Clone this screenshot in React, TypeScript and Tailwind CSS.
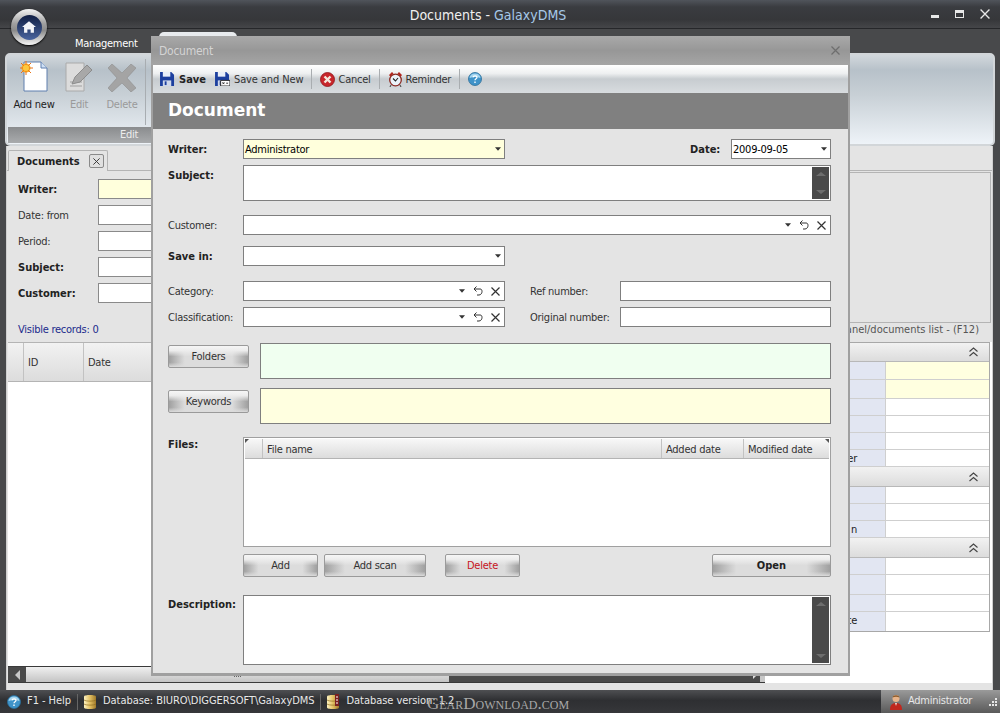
import { ReactNode } from "react";

const Dropdown = () => (
  <svg width="6" height="4" viewBox="0 0 7 4" className="shrink-0">
    <path d="M0 0h7L3.500 4z" fill="#333" />
  </svg>
);

const Undo = () => (
  <svg width="10" height="10" viewBox="0 0 10 10" fill="none" stroke="#333" strokeWidth="1" className="shrink-0">
    <path d="M2 3h5c1.500 0 2 1 2 2.500S8 9 6 9H4" />
    <path d="M3.500 .5 1 3l2.500 2.500" />
  </svg>
);

const Cross = ({ color = "#333", size = 9 }: { color?: string; size?: number }) => (
  <svg width={size} height={size} viewBox="0 0 9 9" stroke={color} strokeWidth="1.200" className="shrink-0">
    <path d="M.5 .5l8 8M8.500 .5l-8 8" />
  </svg>
);

const Chevrons = () => (
  <svg width="9" height="10" viewBox="0 0 9 10" fill="none" stroke="#444" strokeWidth="1.100">
    <path d="M.5 4.500 4.500 1l4 3.500M.5 9 4.500 5.500l4 3.500" />
  </svg>
);

const Floppy = ({ small }: { small?: boolean }) => (
  <svg width="15" height="14" viewBox="0 0 16 15" className="shrink-0">
    <path d="M0 0h12l3 3v12H0z" fill="#1c3f9e" />
    <path d="M3 0h8v5H3z" fill="#e8eef8" />
    <path d="M3 9h9v6H3z" fill="#cfd8ea" />
    <path d="M5 10h2v4H5z" fill="#1c3f9e" />
    {small && <path d="M6 9h10v6H6z" fill="#fff" stroke="#222" strokeWidth="1" />}
    {small && <path d="M8 11l2 2M10 11l-2 2M12 12h2" stroke="#222" strokeWidth="1" />}
  </svg>
);

const CancelIcon = () => (
  <svg width="15" height="15" viewBox="0 0 15 15" className="shrink-0">
    <circle cx="7.500" cy="7.500" r="7" fill="#c8262b" stroke="#8e1418" strokeWidth=".8" />
    <path d="M4.500 4.500l6 6M10.500 4.500l-6 6" stroke="#f4e8dc" strokeWidth="2.400" />
  </svg>
);

const ClockIcon = () => (
  <svg width="15" height="16" viewBox="0 0 15 16" className="shrink-0">
    <path d="M1 4 4 1l1.500 1.500L2.500 6zM14 4l-3-3-1.500 1.500 3 3.500z" fill="#b3261e" />
    <circle cx="7.500" cy="9" r="5.800" fill="#eaf3fa" stroke="#8c2a22" strokeWidth="1.300" />
    <path d="M5 7.500 7.500 10 10 7" fill="none" stroke="#222" strokeWidth="1.100" />
    <path d="M3 14l-1 2M12 14l1 2" stroke="#555" strokeWidth="1.200" />
  </svg>
);

const HelpIcon = ({ size = 14 }: { size?: number }) => (
  <svg width={size} height={size} viewBox="0 0 14 14" className="shrink-0">
    <circle cx="7" cy="7" r="6.500" fill="#3f93c9" stroke="#2a6d99" strokeWidth=".8" />
    <path d="M1.500 6a5.500 4.500 0 0 1 11 0c-3 -1.500 -8 -1.500 -11 0z" fill="#a4d4ee" />
    <path d="M5 5.300c.3-2 4-2 4 0 0 1.500-2 1.300-2 3" fill="none" stroke="#fff" strokeWidth="1.300" />
    <path d="M6.300 9.500h1.400v1.400H6.300z" fill="#fff" />
  </svg>
);

const DbIcon = ({ tag }: { tag?: boolean }) => (
  <svg width="14" height="16" viewBox="0 0 14 16" className="shrink-0">
    <defs>
      <linearGradient id="dbGold" x1="0" x2="1" y1="0" y2="0">
        <stop offset="0" stopColor="#fdf2c0" />
        <stop offset=".5" stopColor="#e2bf62" />
        <stop offset="1" stopColor="#a07a2a" />
      </linearGradient>
    </defs>
    <path d="M1 2.500C1 .5 13 .5 13 2.500v11c0 2-12 2-12 0z" fill="url(#dbGold)" />
    <path d="M1 6c2 1.500 10 1.500 12 0M1 10c2 1.500 10 1.500 12 0" fill="none" stroke="#8e6b20" strokeWidth=".7" />
    {tag && <path d="M9 0h4v12H9z" fill="#7a1f1f" />}
    {tag && <path d="M10 3h2M10 6h2M10 9h2" stroke="#fff" strokeWidth="1" />}
  </svg>
);

const UserIcon = () => (
  <svg width="14" height="16" viewBox="0 0 14 16">
    <circle cx="7" cy="4.500" r="3.500" fill="#e8b48a" />
    <path d="M3.500 3.500C4 .5 10 .5 10.500 3.500 8.500 2.500 5.500 2.500 3.500 3.500z" fill="#8a5a2a" />
    <path d="M1 16c0-5 2-7 6-7s6 2 6 7z" fill="#c0281e" />
    <path d="M6 9h2l-1 3z" fill="#f0e0d0" />
  </svg>
);

const Grip = () => (
  <svg width="10" height="10" viewBox="0 0 10 10" className="shrink-0">
    <path d="M8 1h2v2H8zM5 4h2v2H5zM8 4h2v2H8zM2 7h2v2H2zM5 7h2v2H5zM8 7h2v2H8z" fill="#e8e8e8" />
  </svg>
);

const HomeButton = () => (
  <div className="absolute left-[11px] top-[9px] w-[36px] h-[36px] rounded-full bg-[linear-gradient(#f4f4f4_0%,#a0a0a0_40%,#8a8a8a_60%,#f8f8f8_100%)] flex items-center justify-center shadow-[0_1px_2px_#000]">
    <div className="w-[25px] h-[25px] rounded-full bg-gradient-to-b from-[#111f44] to-[#4a659f] flex items-center justify-center">
      <svg width="14" height="12" viewBox="0 0 17 14">
        <path d="M8.500 0 0 7h2.500v7h4v-4h4v4h4V7H17z" fill="#f2f4f8" />
      </svg>
    </div>
  </div>
);

const RibbonButton = ({ icon, label, disabled, className }: { icon: ReactNode; label: string; disabled?: boolean; className: string }) => (
  <div className={`flex flex-col items-center pt-[5px] ${className}`}>
    <div className="h-[31px] flex items-end">{icon}</div>
    <span className={`mt-[6px] text-[11px] leading-[14px] whitespace-nowrap ${disabled ? "text-[#9a9a9a]" : "text-[#222]"}`}>{label}</span>
  </div>
);

const NewDocIcon = () => (
  <svg width="28" height="31" viewBox="0 0 28 31">
    <path d="M4 1h17l6 6v23H4z" fill="#fff" stroke="#5e7fae" strokeWidth="1" />
    <path d="M21 1v6h6" fill="#cfe0f4" stroke="#5e7fae" strokeWidth="1" />
    <circle cx="6" cy="7" r="4.500" fill="#f7a820" />
    <path d="M6 0v14M-1 7h14M1 2l10 10M11 2 1 12" stroke="#e8741a" strokeWidth="1" />
    <circle cx="6" cy="7" r="3" fill="#fcc840" />
  </svg>
);

const EditDocIcon = () => (
  <svg width="29" height="30" viewBox="0 0 29 30">
    <path d="M1 1h18v28H1z" fill="#dcdcdc" stroke="#aaa" strokeWidth="1" />
    <path d="M5 20h12M5 24h12" stroke="#b4b4b4" strokeWidth="1.500" />
    <path d="M7 22 10 15 22 3l5 5-12 12z" fill="#a8a8a8" stroke="#8c8c8c" strokeWidth="1" />
  </svg>
);

const DeleteIcon = () => (
  <svg width="28" height="28" viewBox="0 0 28 28">
    <path d="M4 0 14 9 23 0l5 4-9 10 9 10-5 4-9-9-10 9-4-4 9-10L0 4z" fill="#a4a4a4" stroke="#8e8e8e" strokeWidth=".6" />
  </svg>
);

const ToolDivider = () => <div className="w-px h-[20px] bg-[#a9adb0]" />;

const ToolText = ({ children, className = "" }: { children: ReactNode; className?: string }) => (
  <span className={`pt-[2px] ${className}`}>{children}</span>
);

const Combo = ({ value, className, yellow }: { value?: string; className: string; yellow?: boolean }) => (
  <div className={`h-[20px] border border-[#7f7f7f] flex items-center pl-[1px] pr-[3px] text-[11px] text-black ${yellow ? "bg-[#ffffdc]" : "bg-white"} ${className}`}>
    <span className="flex-1 pt-[2px] leading-[14px]">{value}</span>
    <Dropdown />
  </div>
);

const Picker = ({ className }: { className: string }) => (
  <div className={`h-[20px] border border-[#7f7f7f] bg-white flex items-center justify-end gap-[8px] pr-[4px] ${className}`}>
    <Dropdown />
    <Undo />
    <Cross />
  </div>
);

const TextBox = ({ className }: { className: string }) => <div className={`h-[20px] border border-[#7f7f7f] bg-white ${className}`} />;

const MemoBox = ({ className }: { className: string }) => (
  <div className={`border border-[#7f7f7f] bg-white flex justify-end p-[1px] ${className}`}>
    <div className="w-[17px] bg-[#4a4a4a] flex flex-col justify-between items-center py-[5px]">
      <div className="w-0 h-0 border-x-[5px] border-x-transparent border-b-[4px] border-b-[#6e6e6e]" />
      <div className="w-0 h-0 border-x-[5px] border-x-transparent border-t-[4px] border-t-[#6e6e6e]" />
    </div>
  </div>
);

const Btn = ({ label, className, text = "text-[#333]" }: { label: string; className: string; text?: string }) => (
  <div className={`h-[23px] pt-[2px] rounded-[2px] border border-[#9a9a9a] bg-[image:linear-gradient(#f6f6f6_0%,#ececec_22%,transparent_50%,transparent_78%,#dcdcdc_100%),linear-gradient(90deg,#a0a0a0_0%,#dcdcdc_20%,#dcdcdc_80%,#a0a0a0_100%)] flex items-center justify-center text-[11px] ${text} ${className}`}>
    {label}
  </div>
);

const Label = ({ children, bold, className = "w-[75px]" }: { children: ReactNode; bold?: boolean; className?: string }) => (
  <span className={`shrink-0 h-[20px] text-[11px] leading-[22px] ${bold ? "font-bold tracking-normal text-[#222]" : "text-[#333]"} ${className}`}>{children}</span>
);

const HeaderCell = ({ label, className }: { label?: string; className: string }) => (
  <div className={`h-full border-r border-[#c2c2c2] flex items-center pl-[4px] text-[11px] text-[#333] ${className}`}>{label}</div>
);

const FilterRow = ({ label, bold, yellow }: { label: string; bold?: boolean; yellow?: boolean }) => (
  <div className="flex items-center h-[20px]">
    <span className={`w-[80px] shrink-0 pt-[2px] text-[11px] ${bold ? "font-bold tracking-normal text-[#222]" : "text-[#333]"}`}>{label}</span>
    <div className={`w-[70px] h-[20px] border border-[#8a8a8a] ${yellow ? "bg-[#ffffdc]" : "bg-white"}`} />
  </div>
);

const PropHeader = ({ className }: { className: string }) => (
  <div className={`bg-gradient-to-b from-[#f2f2f2] to-[#dcdcdc] border-b border-[#b8b8b8] flex items-center justify-end pr-[11px] ${className}`}>
    <Chevrons />
  </div>
);

const PropRow = ({ label, yellow, className }: { label?: string; yellow?: boolean; className: string }) => (
  <div className={`flex border-b border-[#cfcfcf] ${className}`}>
    <div className="w-[118px] bg-[#e2e6f2] text-[11px] leading-[16px] text-[#222] text-right pr-[28px] pt-[1px]">{label}</div>
    <div className={`flex-1 border-l border-[#cfcfcf] ${yellow ? "bg-[#ffffe0]" : "bg-white"}`} />
  </div>
);

const Dialog = () => (
  <div className="absolute left-[151px] top-[36px] w-[699px] h-[640px] border-x-[2px] border-b-[3px] border-[#a0a0a0] bg-[#e4e4e4] flex flex-col">
    <div className="h-[29px] shrink-0 -mx-[2px] bg-gradient-to-b from-[#a9a9a9] via-[#979797] to-[#a5a5a5] flex items-center justify-between pl-[8px] pr-[10px]">
      <span className="text-[12px] text-[#d4d4d4]">Document</span>
      <Cross color="#6e6e6e" size={9} />
    </div>
    <div className="h-[28px] shrink-0 bg-[linear-gradient(#ffffff_0%,#eef0f1_30%,#c7ccd0_50%,#d8dcdf_100%)] flex items-center pl-[7px] text-[11px] text-[#333]">
      <Floppy />
      <ToolText className="ml-[4px] font-bold tracking-normal text-[#222]">Save</ToolText>
      <span className="ml-[9px]"><Floppy small /></span>
      <ToolText className="ml-[4px] tracking-[-0.1px]">Save and New</ToolText>
      <span className="ml-[7px]"><ToolDivider /></span>
      <span className="ml-[8px]"><CancelIcon /></span>
      <ToolText className="ml-[4px]">Cancel</ToolText>
      <span className="ml-[8px]"><ToolDivider /></span>
      <span className="ml-[8px]"><ClockIcon /></span>
      <ToolText className="ml-[3px]">Reminder</ToolText>
      <span className="ml-[8px]"><ToolDivider /></span>
      <span className="ml-[8px]"><HelpIcon /></span>
    </div>
    <div className="h-[36px] shrink-0 bg-[#808080] pl-[15px] flex items-center font-['DejaVu_Sans',sans-serif] text-[17px] tracking-normal font-bold text-white">Document</div>

    <div className="flex-1 pl-[15px] pr-[17px] pt-[10px] flex flex-col">
      <div className="flex items-center">
        <Label bold>Writer:</Label>
        <Combo value="Administrator" yellow className="w-[262px]" />
        <Label bold className="ml-auto w-[41px]">Date:</Label>
        <Combo value="2009-09-05" className="w-[100px]" />
      </div>
      <div className="flex mt-[6px]">
        <Label bold className="w-[75px]">Subject:</Label>
        <MemoBox className="flex-1 h-[36px]" />
      </div>
      <div className="flex items-center mt-[14px]">
        <Label>Customer:</Label>
        <Picker className="flex-1" />
      </div>
      <div className="flex items-center mt-[11px]">
        <Label bold>Save in:</Label>
        <Combo className="w-[262px]" />
      </div>
      <div className="flex items-center mt-[15px]">
        <Label>Category:</Label>
        <Picker className="w-[262px]" />
        <Label className="ml-[25px] w-[90px]">Ref number:</Label>
        <TextBox className="flex-1" />
      </div>
      <div className="flex items-center mt-[6px]">
        <Label>Classification:</Label>
        <Picker className="w-[262px]" />
        <Label className="ml-[25px] w-[90px]">Original number:</Label>
        <TextBox className="flex-1" />
      </div>
      <div className="flex items-start mt-[16px]">
        <Btn label="Folders" className="w-[81px] mt-[2px]" />
        <div className="flex-1 h-[36px] ml-[11px] border border-[#7f7f7f] bg-[#f0fff0]" />
      </div>
      <div className="flex items-start mt-[9px]">
        <Btn label="Keywords" className="w-[81px] mt-[2px]" />
        <div className="flex-1 h-[36px] ml-[11px] border border-[#7f7f7f] bg-[#ffffe0]" />
      </div>
      <div className="flex mt-[13px]">
        <Label bold className="w-[75px] -mt-[3px]">Files:</Label>
        <div className="flex-1 h-[110px] border border-[#a0a0a0] bg-white p-[1px]">
          <div className="relative h-[20px] bg-gradient-to-b from-[#f8f8f8] to-[#dcdcdc] border-b border-[#b4b4b4] flex">
            <div className="absolute left-0 top-0 w-0 h-0 border-t-[4px] border-t-[#555] border-r-[4px] border-r-transparent" />
            <div className="absolute right-0 top-0 w-0 h-0 border-t-[4px] border-t-[#555] border-l-[4px] border-l-transparent" />
            <HeaderCell className="w-[18px]" />
            <HeaderCell label="File name" className="w-[399px] pl-[3px] pt-[3px]" />
            <HeaderCell label="Added date" className="w-[82px] pt-[3px]" />
            <HeaderCell label="Modified date" className="flex-1 border-r-0 pt-[3px]" />
          </div>
        </div>
      </div>
      <div className="flex mt-[7px] pl-[75px]">
        <Btn label="Add" className="w-[75px]" />
        <Btn label="Add scan" className="w-[102px] ml-[6px]" />
        <Btn label="Delete" text="text-[#c8141e]" className="w-[75px] ml-[19px]" />
        <Btn label="Open" text="text-[#222] font-bold tracking-normal" className="w-[119px] ml-auto" />
      </div>
      <div className="flex mt-[18px]">
        <Label bold className="w-[75px] -mt-[1px]">Description:</Label>
        <MemoBox className="flex-1 h-[70px]" />
      </div>
    </div>
  </div>
);

export default function App() {
  return (
    <div className="relative w-[1000px] h-[713px] overflow-hidden bg-[#48494b] flex flex-col tracking-[-0.25px] font-['DejaVu_Sans_Condensed','Noto_Sans',sans-serif]">
      {/* title bar */}
      <div className="h-[29px] shrink-0 pt-[2px] pr-[24px] tracking-normal bg-[linear-gradient(#50545b_0%,#3a3c40_25%,#36373a_70%,#454649_100%)] border-b border-[#26272a] flex items-center justify-center relative text-[14px] text-[#f0f0f0]">
        <span>Documents - <span className="text-[#a6c8e8]">GalaxyDMS</span></span>
        <div className="absolute right-[10px] top-[9px] flex items-start gap-[16px]">
          <div className="w-[8px] h-[3px] mt-[6px] bg-[#e8e8e8]" />
          <div className="w-[9px] h-[8px] mt-[1px] border border-[#e8e8e8] border-t-[3px]" />
          <Cross color="#e8e8e8" size={10} />
        </div>
      </div>

      {/* menu tabs */}
      <div className="h-[24px] shrink-0 flex items-end pl-[75px]">
        <span className="w-[84px] pb-[2px] text-[11px] leading-[14px] text-white">Management</span>
        <div className="w-[78px] h-[21px] rounded-t-[5px] bg-[#e8ebee]" />
      </div>

      {/* ribbon */}
      <div className="h-[93px] shrink-0 ml-[5px] mr-[5px] rounded-[5px] border-[2px] border-[#d2d6d9] bg-[linear-gradient(#d2d8dc_0%,#b7c1c9_17%,#c8d0d6_45%,#eef3f8_100%)] flex">
        <div className="w-[150px] mt-[1px] ml-[1px] mb-[1px] flex flex-col">
          <div className="flex-1 flex">
            <RibbonButton icon={<NewDocIcon />} label="Add new" className="w-[52px]" />
            <RibbonButton icon={<EditDocIcon />} label="Edit" disabled className="w-[40px] -ml-[1px]" />
            <RibbonButton icon={<DeleteIcon />} label="Delete" disabled className="w-[44px] ml-[1px]" />
            <div className="w-px h-[66px] mt-[3px] ml-[1px] bg-[#a8adb1]" />
          </div>
          <div className="h-[16px] bg-gradient-to-b from-[#8a8c8e] to-[#a9abad] text-[11px] leading-[16px] text-[#ededed] pl-[112px]">Edit</div>
        </div>
      </div>

      {/* main area */}
      <div className="flex-1 ml-[6px] mr-[7px] border-x border-[#cfcfcf] bg-[#e4e4e4] flex min-h-0">
        <div className="w-[758px] shrink-0 flex flex-col">
          <div className="flex items-end h-[25px] border-b border-[#b4b4b4] pl-[1px]">
            <div className="w-[100px] h-[21px] -mb-px rounded-t-[2px] border border-b-0 border-[#b4b4b4] bg-[#e4e4e4] flex items-center pl-[8px] pr-[3px] justify-between text-[11px] font-bold tracking-normal text-[#222]">
              <span className="pt-[2px]">Documents</span>
              <div className="w-[15px] h-[14px] rounded-[2px] border border-[#8a8a8a] bg-[#e0e0e0] flex items-center justify-center">
                <Cross size={7} />
              </div>
            </div>
          </div>
          <div className="pl-[11px] pt-[8px] flex flex-col gap-[6px]">
            <FilterRow label="Writer:" bold yellow />
            <FilterRow label="Date: from" />
            <FilterRow label="Period:" />
            <FilterRow label="Subject:" bold />
            <FilterRow label="Customer:" bold />
          </div>
          <div className="pl-[11px] mt-[20px] text-[11px] leading-[14px] text-[#1a2a8c]">Visible records: 0</div>
          <div className="h-[40px] mt-[5px] shrink-0 ml-px bg-gradient-to-b from-[#f2f2f2] to-[#dcdcdc] border-y border-[#b4b4b4] flex">
            <HeaderCell className="w-[16px]" />
            <HeaderCell label="ID" className="w-[60px] pt-[2px]" />
            <HeaderCell label="Date" className="flex-1 border-r-0 pt-[2px]" />
          </div>
          <div className="flex-1 bg-white ml-px" />
          <div className="h-[17px] shrink-0 ml-px flex items-stretch border-y border-[#3a3a3a] bg-[#4a4a4a]">
            <div className="w-[18px] flex items-center justify-center">
              <div className="w-0 h-0 border-y-[5px] border-y-transparent border-r-[5px] border-r-[#c8c8c8]" />
            </div>
            <div className="w-[423px] bg-gradient-to-b from-[#f0f0f0] to-[#c4c4c4] flex items-center justify-center gap-[1px]">
              <div className="w-px h-[5px] bg-[#666]" />
              <div className="w-px h-[5px] bg-[#666]" />
              <div className="w-px h-[5px] bg-[#666]" />
              <div className="w-px h-[5px] bg-[#666]" />
            </div>
            <div className="flex-1 flex items-center justify-end pr-[3px]">
              <div className="w-0 h-0 border-y-[4px] border-y-transparent border-l-[4px] border-l-[#e0e0e0]" />
            </div>
            <div className="w-[5px] bg-[#c8c8c8]" />
          </div>
          <div className="h-[7px] shrink-0 bg-[#e4e4e4]" />
        </div>
        <div className="flex-1 min-w-0 bg-white flex flex-col">
          <div className="bg-[#e4e4e4] pb-[5px]">
            <div className="h-[25px] border-b border-[#b4b4b4]" />
            <div className="mx-[1px] mt-[1px] h-[151px] border border-[#b4b4b4]" />
            <div className="text-right pr-[13px] tracking-normal text-[11px] leading-[14px] text-[#555]">anel/documents list - (F12)</div>
          </div>
          <div className="ml-[1px] mr-[2px] border border-[#a8a8a8] bg-white">
            <PropHeader className="h-[19px]" />
            <PropRow yellow className="h-[18px]" />
            <PropRow yellow className="h-[19px]" />
            <PropRow className="h-[17px]" />
            <PropRow className="h-[17px]" />
            <PropRow className="h-[17px]" />
            <PropRow label="er" className="h-[17px]" />
            <PropHeader className="h-[20px]" />
            <PropRow className="h-[17px]" />
            <PropRow className="h-[17px]" />
            <PropRow label="n" className="h-[17px]" />
            <PropHeader className="h-[20px]" />
            <PropRow className="h-[17px]" />
            <PropRow className="h-[20px]" />
            <PropRow className="h-[17px]" />
            <PropRow label="te" className="h-[19px] border-b-0" />
          </div>
          <div className="flex-1" />
          <div className="h-[7px] shrink-0 bg-[#e4e4e4]" />
        </div>
      </div>

      {/* status bar */}
      <div className="h-[23px] shrink-0 tracking-[-0.05px] bg-[linear-gradient(#4e4f52_0%,#2e2f32_45%,#36373a_100%)] flex items-center pl-[7px] text-[11px] text-[#e8e8e8]">
        <HelpIcon />
        <span className="ml-[6px]">F1 - Help</span>
        <div className="w-px h-[16px] bg-[#666] ml-[6px]" />
        <span className="ml-[5px]"><DbIcon /></span>
        <span className="ml-[6px]">Database: BIURO\DIGGERSOFT\GalaxyDMS</span>
        <div className="w-px h-[16px] bg-[#666] ml-[6px]" />
        <span className="ml-[5px]"><DbIcon tag /></span>
        <span className="ml-[6px]">Database version: 1.2</span>
        <div className="ml-auto w-[119px] h-full tracking-[-0.25px] bg-gradient-to-b from-[#9a9a9a] to-[#5a5a5a] flex items-center pl-[8px] pr-[3px]">
          <UserIcon />
          <span className="ml-[5px] flex-1">Administrator</span>
          <Grip />
        </div>
      </div>

      <HomeButton />
      <Dialog />
      <div className="absolute left-[427px] top-[695px] font-['Liberation_Serif',serif] text-[17px] leading-[18px] tracking-normal text-[#a8a8a8] [font-variant:small-caps]">GearDownload.com</div>
    </div>
  );
}
